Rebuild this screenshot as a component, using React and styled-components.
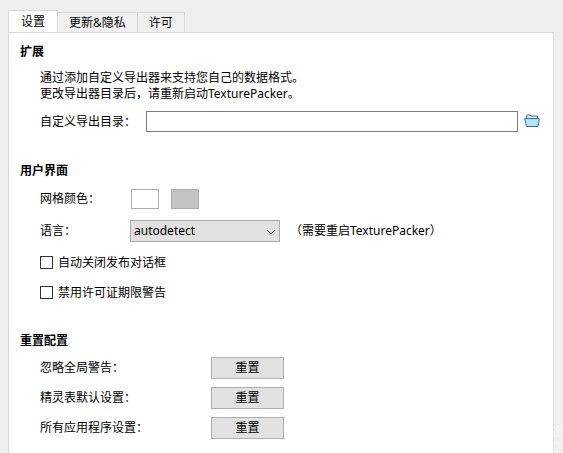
import React, { useState } from "react";
import styled, { createGlobalStyle } from "styled-components";

const tabs = ["设置", "更新&隐私", "许可"];

const resets = ["忽略全局警告：", "精灵表默认设置：", "所有应用程序设置："];

const FolderIcon = () => (
	<svg width="16" height="14" viewBox="0 0 16 14" fill="none" aria-hidden="true">
		<path d="M2.5 5V1.8Q2.5 1 3.3 1H6l1 1h5.7q.8 0 .8.8V5" fill="#d3f0fb" stroke="#3d6d8a" />
		<path d="M.6 4.6h14.8L14 12.5H2.6z" fill="#b5e4f7" stroke="#3d6d8a" strokeLinejoin="round" />
	</svg>
);

const ChevronIcon = () => (
	<Chevron width="10" height="6" viewBox="0 0 10 6" fill="none" aria-hidden="true">
		<path d="M1 1l4 4 4-4" stroke="#444" />
	</Chevron>
);

const Watermark = () => (
	<WatermarkSvg width="10" height="26" viewBox="0 0 10 26" fill="none" aria-hidden="true">
		<path d="M0 4h2M1 8v6M3 4h6M5 2v12M8 4v8l2 2M3 8h4M2 20h2M6 20h3M6 23h3" stroke="#fff" />
	</WatermarkSvg>
);

const App = () => {
	const [active, setActive] = useState(0);

	return (
		<Page lang="zh-CN">
			<GlobalStyle />
			<TabBar role="tablist">
				{tabs.map((tab, i) => (
					<Tab key={tab} role="tab" aria-selected={i === active} $active={i === active} onClick={() => setActive(i)}>
						{tab}
					</Tab>
				))}
			</TabBar>

			<Panel role="tabpanel">
				<Section>
					<Heading>扩展</Heading>
					<Rows $gap="9px">
						<Hint>
							通过添加自定义导出器来支持您自己的数据格式。
							<br />
							更改导出器目录后，请重新启动TexturePacker。
						</Hint>
						<Row>
							<Label htmlFor="directory" $width="106px">自定义导出目录：</Label>
							<TextInput id="directory" type="text" />
							<IconButton aria-label="浏览">
								<FolderIcon />
							</IconButton>
						</Row>
					</Rows>
				</Section>

				<Section>
					<Heading>用户界面</Heading>
					<Rows $gap="11px">
						<Row>
							<Label as="span" $width="91px">网格颜色：</Label>
							<Swatches>
								<Swatch aria-label="网格颜色 1" $color="#fff" />
								<Swatch aria-label="网格颜色 2" $color="#c3c3c3" />
							</Swatches>
						</Row>
						<Row>
							<Label htmlFor="language" $width="90px">语言：</Label>
							<SelectBox>
								<Select id="language" defaultValue="auto">
									<option value="auto">autodetect</option>
								</Select>
								<ChevronIcon />
							</SelectBox>
							<Note>（需要重启TexturePacker）</Note>
						</Row>
						<CheckRow>
							<Checkbox type="checkbox" />
							自动关闭发布对话框
						</CheckRow>
						<CheckRow>
							<Checkbox type="checkbox" />
							禁用许可证期限警告
						</CheckRow>
					</Rows>
				</Section>

				<Section $gap="6px">
					<Heading>重置配置</Heading>
					<Rows $gap="8px">
						{resets.map((text, i) => (
							<Row key={text}>
								<Label htmlFor={`reset-${i}`} $width="171px">{text}</Label>
								<ResetButton id={`reset-${i}`}>重置</ResetButton>
							</Row>
						))}
					</Rows>
				</Section>
			</Panel>
			<Watermark />
		</Page>
	);
};

const GlobalStyle = createGlobalStyle`
	* {
		box-sizing: border-box;
	}

	body {
		margin: 0;
		background: #efefef;
	}

	body, button, input, select {
		color: #000;
		font-family: "Noto Sans", "Noto Sans CJK SC", sans-serif;
		font-size: 12px;
		line-height: 16px;
	}
`;

const Page = styled.div`
	position: relative;
	display: flex;
	flex-direction: column;
	min-height: 100vh;
	padding: 10px 9px 0 8px;
`;

const TabBar = styled.div`
	display: flex;
	align-items: flex-end;
`;

const Tab = styled.button`
	height: ${({ $active }) => ($active ? "23px" : "21px")};
	margin: 0 0 -1px;
	padding: ${({ $active }) => ($active ? "0 12px" : "0 11px")};
	border: 1px solid #d9d9d9;
	border-left-width: ${({ $active }) => ($active ? "1px" : "0")};
	border-bottom-color: ${({ $active }) => ($active ? "#fff" : "#d9d9d9")};
	background: ${({ $active }) => ($active ? "#fff" : "#f0f0f0")};
`;

const Panel = styled.main`
	display: flex;
	flex: 1;
	flex-direction: column;
	gap: 29px;
	padding: 9px 11px 13px;
	border: 1px solid #d9d9d9;
	border-bottom: 0;
	background: #fff;
`;

const Section = styled.section`
	display: flex;
	flex-direction: column;
	gap: ${({ $gap }) => $gap || "8px"};
`;

const Heading = styled.h2`
	margin: 0;
	font-size: 12px;
	font-weight: 700;
	line-height: 20px;
`;

const Rows = styled.div`
	display: flex;
	flex-direction: column;
	gap: ${({ $gap }) => $gap};
	padding-left: 20px;
`;

const Hint = styled.p`
	margin: 0;
`;

const Row = styled.div`
	display: flex;
	align-items: center;
`;

const Label = styled.label`
	flex: none;
	width: ${({ $width }) => $width};
`;

const TextInput = styled.input`
	flex: 1;
	min-width: 0;
	height: 21px;
	padding: 0 4px;
	border: 1px solid #7a7a7a;
	border-radius: 0;
	background: #fff;
`;

const IconButton = styled.button`
	display: flex;
	margin: 0 0 0 6px;
	padding: 0 2px 2px 0;
	border: 0;
	background: none;
`;

const Swatches = styled.div`
	display: flex;
	gap: 12px;
`;

const Swatch = styled.button`
	width: 28px;
	height: 20px;
	padding: 0;
	border: 1px solid #adadad;
	background: ${({ $color }) => $color};
`;

const SelectBox = styled.div`
	position: relative;
	width: 150px;
`;

const Select = styled.select`
	display: block;
	width: 100%;
	height: 22px;
	padding: 0 24px 0 3px;
	border: 1px solid #adadad;
	border-radius: 0;
	background: #e1e1e1;
	appearance: none;
`;

const Chevron = styled.svg`
	position: absolute;
	top: 9px;
	right: 4px;
	pointer-events: none;
`;

const Note = styled.span`
	margin-left: 10px;
`;

const CheckRow = styled.label`
	display: flex;
	align-items: center;
	gap: 5px;
	height: 19px;
`;

const Checkbox = styled.input`
	width: 13px;
	height: 13px;
	margin: 0;
	border: 1px solid #333;
	background: #fff;
	appearance: none;

	&:checked {
		background: #333;
		box-shadow: inset 0 0 0 2px #fff;
	}
`;

const ResetButton = styled.button`
	width: 73px;
	height: 22px;
	padding: 0;
	border: 1px solid #adadad;
	background: #e1e1e1;
`;

const WatermarkSvg = styled.svg`
	position: absolute;
	right: 0;
	bottom: 4px;
	opacity: 0.6;
	pointer-events: none;
`;

export default App;
